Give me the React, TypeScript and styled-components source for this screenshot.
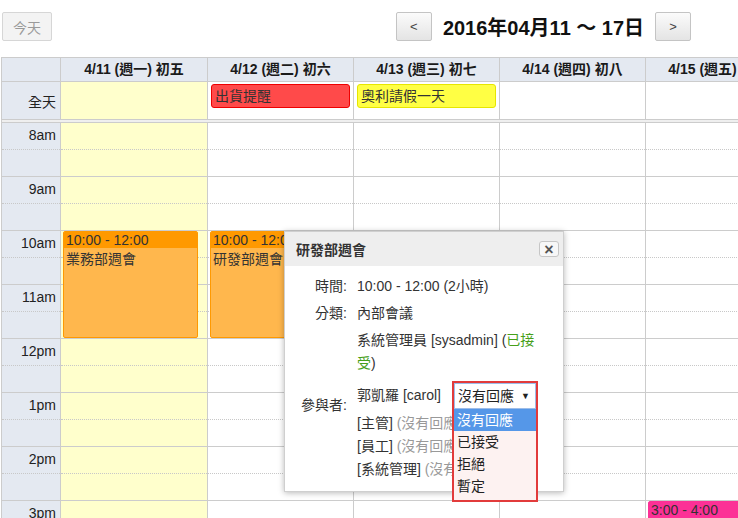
import React from 'react';
import styled, { createGlobalStyle } from 'styled-components';

const FONT = '"Liberation Sans", Arial, "Noto Sans CJK TC", sans-serif';

const GlobalStyle = createGlobalStyle`
  html, body { margin: 0; padding: 0; background: #fff; overflow: hidden; }
  body { font-family: ${FONT}; font-size: 14px; color: #333; }
  * { box-sizing: border-box; }
`;

const COLS = '59px 147px repeat(6, 146px)';
const HOUR_H = 54;
const START_HOUR = 8;

const Page = styled.div`
  position: relative;
  width: 1086px;
  padding: 12px 0 0 1px;
`;

const Toolbar = styled.div`
  display: grid;
  grid-template-columns: 1fr auto 1fr;
  align-items: center;
  height: 29px;
  margin-bottom: 16px;
`;

const ToolbarLeft = styled.div`
  display: flex;
  padding-left: 1px;
`;

const ToolbarCenter = styled.div`
  display: flex;
  align-items: center;
  gap: 11px;
`;

const Button = styled.button<{ $muted?: boolean }>`
  height: 29px;
  min-width: 36px;
  padding: 0 10px;
  border: 1px solid ${(p) => (p.$muted ? '#d6d6d6' : '#c4c4c4')};
  border-radius: 2px;
  background: ${(p) => (p.$muted ? '#f3f3f3' : 'linear-gradient(#fbfbfb, #e4e4e4)')};
  color: ${(p) => (p.$muted ? '#9a9a9a' : '#444')};
  font-family: ${FONT};
  font-size: ${(p) => (p.$muted ? '14px' : '13px')};
  cursor: pointer;
`;

const Title = styled.h2`
  margin: 0;
  font-size: 20px;
  font-weight: bold;
  color: #111;
  white-space: nowrap;
`;

const Calendar = styled.div`
  width: fit-content;
  border-top: 1px solid #ccc;
  border-left: 1px solid #ccc;
`;

const HeaderRow = styled.div`
  display: grid;
  grid-template-columns: ${COLS};
  background: #e4e9f1;
  border-bottom: 1px solid #ccc;
`;

const HeaderCell = styled.div`
  height: 23px;
  line-height: 23px;
  text-align: center;
  font-size: 14px;
  font-weight: bold;
  color: #1a1a1a;
  border-right: 1px solid #ccc;
  white-space: nowrap;
`;

const AllDayRow = styled.div`
  display: grid;
  grid-template-columns: ${COLS};
  border-bottom: 1px solid #ccc;
`;

const AllDayLabel = styled.div`
  height: 37px;
  display: flex;
  align-items: center;
  justify-content: flex-end;
  padding-right: 4px;
  background: #e4e9f1;
  border-right: 1px solid #ccc;
  color: #222;
`;

const AllDayCell = styled.div<{ $today?: boolean }>`
  height: 37px;
  padding: 2px 3px 0 3px;
  background: ${(p) => (p.$today ? '#ffffcc' : '#fff')};
  border-right: 1px solid #ccc;
`;

const AllDayEvent = styled.div<{ $bg: string; $border: string }>`
  width: 139px;
  height: 24px;
  line-height: 22px;
  padding-left: 3px;
  background: ${(p) => p.$bg};
  border: 1px solid ${(p) => p.$border};
  border-radius: 3px;
  color: #333;
  white-space: nowrap;
  overflow: hidden;
`;

const Divider = styled.div`
  height: 3px;
  background: #efefef;
  border-bottom: 1px solid #ccc;
`;

const Body = styled.div`
  display: grid;
  grid-template-columns: ${COLS};
`;

const TimeColumn = styled.div`
  background: #e4e9f1;
  border-right: 1px solid #ccc;
`;

const DayColumn = styled.div<{ $today?: boolean }>`
  position: relative;
  background: ${(p) => (p.$today ? '#ffffcc' : '#fff')};
  border-right: 1px solid #ccc;
`;

const HalfSlot = styled.div<{ $half: 'top' | 'bottom' }>`
  height: ${HOUR_H / 2}px;
  border-bottom: 1px ${(p) => (p.$half === 'top' ? 'dotted #c8c8c8' : 'solid #ccc')};
`;

const TimeLabel = styled(HalfSlot)`
  text-align: right;
  padding: 3px 4px 0 0;
  line-height: 18px;
  color: #222;
`;

const EventBox = styled.div<{ $border: string; $body: string }>`
  position: absolute;
  left: 2px;
  right: 9px;
  border: 1px solid ${(p) => p.$border};
  background: ${(p) => p.$body};
  border-radius: 2px;
  overflow: hidden;
  color: #333;
  z-index: 1;
`;

const EventTime = styled.div<{ $bg: string }>`
  height: 16px;
  line-height: 16px;
  padding-left: 2px;
  background: ${(p) => p.$bg};
  white-space: nowrap;
`;

const EventTitle = styled.div`
  padding: 1px 2px;
  line-height: 20px;
  white-space: nowrap;
`;

/* popup */
const Popup = styled.div`
  position: absolute;
  left: 284px;
  top: 231px;
  width: 280px;
  background: #fff;
  border: 1px solid #cfcfcf;
  box-shadow: 0 1px 6px rgba(0, 0, 0, 0.28);
  z-index: 10;
`;

const PopupHeader = styled.div`
  height: 34px;
  display: flex;
  align-items: center;
  justify-content: space-between;
  padding: 0 4px 0 11px;
  background: #eee;
`;

const PopupTitle = styled.div`
  font-weight: bold;
  color: #333;
`;

const CloseButton = styled.button`
  width: 20px;
  height: 16px;
  padding: 0;
  border: 1px solid #c6c6c6;
  border-radius: 3px;
  background: #f7f7f7;
  color: #555;
  font-family: ${FONT};
  font-size: 16px;
  font-weight: bold;
  line-height: 13px;
  cursor: pointer;
`;

const PopupBody = styled.div`
  display: grid;
  grid-template-columns: 62px 1fr;
  column-gap: 10px;
  row-gap: 4px;
  padding: 9px 12px 10px 0;
  line-height: 23px;
`;

const Label = styled.div`
  text-align: right;
  white-space: nowrap;
  align-self: center;
`;

const Value = styled.div`
  color: #333;
`;

const Attendees = styled.div`
  display: flex;
  flex-direction: column;
`;

const Attendee = styled.div`
  white-space: nowrap;
  overflow: hidden;
`;

const AttendeeWrap = styled.div``;

const SelectRow = styled.div`
  display: flex;
  align-items: center;
  height: 26px;
  margin: 7px 0 4px;
  white-space: nowrap;
`;

const Status = styled.span<{ $tone: 'ok' | 'none' }>`
  color: ${(p) => (p.$tone === 'ok' ? '#46a01a' : '#999')};
`;

const SelectAnchor = styled.div`
  position: relative;
  width: 84px;
  height: 26px;
  margin-left: 12px;
  flex: none;
`;

const DropFrame = styled.div`
  position: absolute;
  left: -1px;
  top: -1px;
  width: 86px;
  border: 2px solid #e23b3b;
  background: #fdf2f1;
  padding-bottom: 3px;
  z-index: 20;
`;

const SelectBox = styled.div`
  height: 26px;
  display: flex;
  align-items: center;
  justify-content: space-between;
  padding: 0 5px 0 3px;
  background: #fff;
  border: 1px solid #9dbde9;
  color: #222;
`;

const Arrow = styled.span`
  font-size: 9px;
  color: #222;
`;

const Option = styled.div<{ $active?: boolean }>`
  height: 22px;
  line-height: 22px;
  padding-left: 3px;
  background: ${(p) => (p.$active ? '#5597e8' : 'transparent')};
  color: ${(p) => (p.$active ? '#fff' : '#222')};
`;

const DAYS = [
  { label: '4/11 (週一) 初五', today: true },
  { label: '4/12 (週二) 初六' },
  { label: '4/13 (週三) 初七' },
  { label: '4/14 (週四) 初八' },
  { label: '4/15 (週五) 初九' },
  { label: '4/16 (週六) 初十' },
  { label: '4/17 (週日) 十一' },
];

const ALL_DAY: Record<number, { title: string; bg: string; border: string }> = {
  1: { title: '出貨提醒', bg: '#ff4a4a', border: '#ee0000' },
  2: { title: '奧利請假一天', bg: '#ffff44', border: '#e6e600' },
};

type Ev = { day: number; start: number; end: number; time: string; title: string; head: string; body: string; border: string };

const EVENTS: Ev[] = [
  { day: 0, start: 10, end: 12, time: '10:00 - 12:00', title: '業務部週會', head: '#ff9900', body: '#ffb74d', border: '#ff9900' },
  { day: 1, start: 10, end: 12, time: '10:00 - 12:00', title: '研發部週會', head: '#ff9900', body: '#ffb74d', border: '#ff9900' },
  { day: 4, start: 15, end: 16, time: '3:00 - 4:00', title: '', head: '#fc3196', body: '#fc3196', border: '#fc3196' },
];

const HOURS = ['8am', '9am', '10am', '11am', '12pm', '1pm', '2pm', '3pm', '4pm', '5pm'];

const OPTIONS = ['沒有回應', '已接受', '拒絕', '暫定'];

export default function App() {
  return (
    <Page>
      <GlobalStyle />
      <Toolbar>
        <ToolbarLeft>
          <Button $muted>今天</Button>
        </ToolbarLeft>
        <ToolbarCenter>
          <Button>&lt;</Button>
          <Title>2016年04月11 〜 17日</Title>
          <Button>&gt;</Button>
        </ToolbarCenter>
        <div />
      </Toolbar>

      <Calendar>
        <HeaderRow>
          <HeaderCell />
          {DAYS.map((d) => (
            <HeaderCell key={d.label}>{d.label}</HeaderCell>
          ))}
        </HeaderRow>
        <AllDayRow>
          <AllDayLabel>全天</AllDayLabel>
          {DAYS.map((d, i) => (
            <AllDayCell key={d.label} $today={d.today}>
              {ALL_DAY[i] && (
                <AllDayEvent $bg={ALL_DAY[i].bg} $border={ALL_DAY[i].border}>
                  {ALL_DAY[i].title}
                </AllDayEvent>
              )}
            </AllDayCell>
          ))}
        </AllDayRow>
        <Divider />
        <Body>
          <TimeColumn>
            {HOURS.map((h) => (
              <React.Fragment key={h}>
                <TimeLabel $half="top">{h}</TimeLabel>
                <HalfSlot $half="bottom" />
              </React.Fragment>
            ))}
          </TimeColumn>
          {DAYS.map((d, i) => (
            <DayColumn key={d.label} $today={d.today}>
              {HOURS.map((h) => (
                <React.Fragment key={h}>
                  <HalfSlot $half="top" />
                  <HalfSlot $half="bottom" />
                </React.Fragment>
              ))}
              {EVENTS.filter((e) => e.day === i).map((e) => (
                <EventBox
                  key={e.time + e.title}
                  $border={e.border}
                  $body={e.body}
                  style={{
                    top: (e.start - START_HOUR) * HOUR_H,
                    height: (e.end - e.start) * HOUR_H - 1,
                  }}
                >
                  <EventTime $bg={e.head}>{e.time}</EventTime>
                  {e.title && <EventTitle>{e.title}</EventTitle>}
                </EventBox>
              ))}
            </DayColumn>
          ))}
        </Body>
      </Calendar>

      <Popup>
        <PopupHeader>
          <PopupTitle>研發部週會</PopupTitle>
          <CloseButton>×</CloseButton>
        </PopupHeader>
        <PopupBody>
          <Label>時間:</Label>
          <Value>10:00 - 12:00 (2小時)</Value>
          <Label>分類:</Label>
          <Value>內部會議</Value>
          <Label>參與者:</Label>
          <Attendees>
            <AttendeeWrap>
              系統管理員 [sysadmin] (<Status $tone="ok">已接受</Status>)
            </AttendeeWrap>
            <SelectRow>
              郭凱羅 [carol]
              <SelectAnchor>
                <DropFrame>
                  <SelectBox>
                    <span>沒有回應</span>
                    <Arrow>▼</Arrow>
                  </SelectBox>
                  {OPTIONS.map((o, i) => (
                    <Option key={o} $active={i === 0}>
                      {o}
                    </Option>
                  ))}
                </DropFrame>
              </SelectAnchor>
            </SelectRow>
            <Attendee>
              [主管] <Status $tone="none">(沒有回應)</Status>
            </Attendee>
            <Attendee>
              [員工] <Status $tone="none">(沒有回應)</Status>
            </Attendee>
            <Attendee>
              [系統管理] <Status $tone="none">(沒有回應)</Status>
            </Attendee>
          </Attendees>
        </PopupBody>
      </Popup>
    </Page>
  );
}
